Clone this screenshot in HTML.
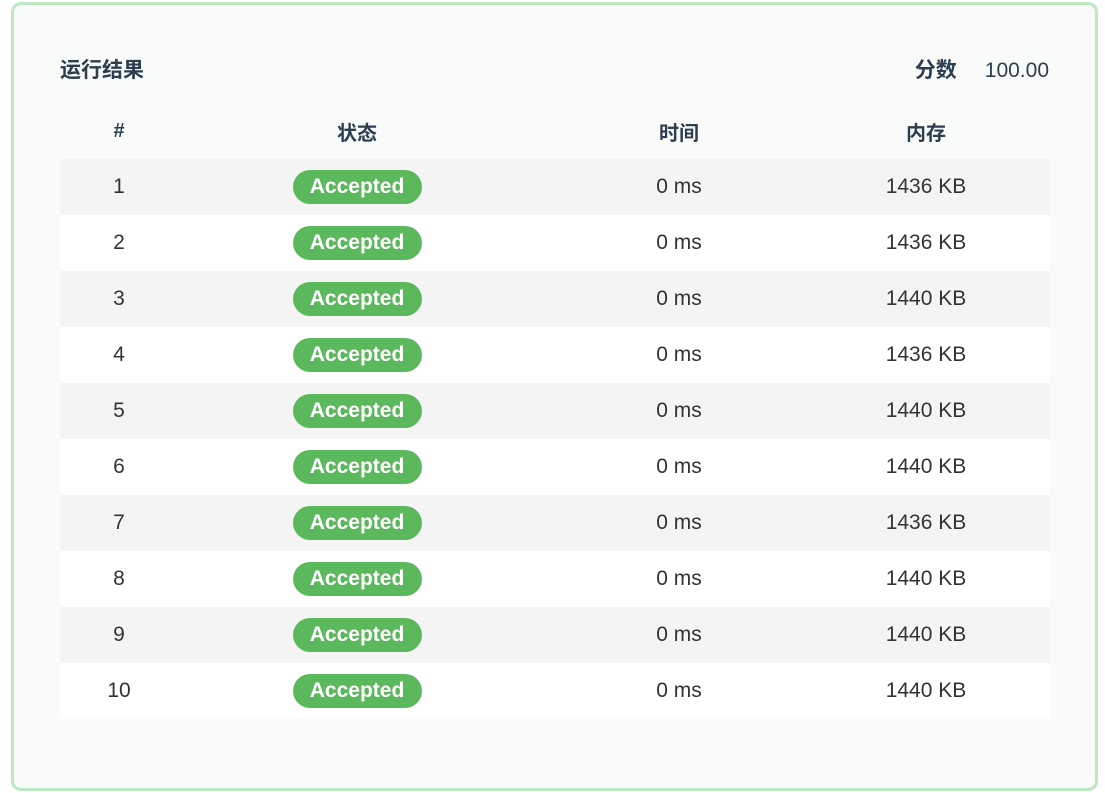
<!DOCTYPE html>
<html><head><meta charset="utf-8"><style>
body{margin:0;width:1105px;height:793px;background:#fff;font-family:"Liberation Sans","Noto Sans CJK SC",sans-serif;color:#333}
.card{position:absolute;left:11px;top:2px;width:1081px;height:783px;border:3px solid #bde8c1;border-radius:10px;background:#f8fbfa}
.title{position:absolute;left:60px;top:54px;font-size:21px;font-weight:bold;color:#2c3e50}
.score{position:absolute;right:56px;top:54px;font-size:21px;color:#2c3e50}
.score b{margin-right:28px}
.tbl{position:absolute;left:60px;top:103px;width:990px}
.row{display:flex;height:56px;align-items:center;font-size:21px;color:#333}
.row.h{font-weight:bold;color:#2c3e50;font-size:20px}
.row.g{background:#f4f4f4}.row.w{background:#fff}
.c{text-align:center}
.c1{width:118px}.c2{width:358px}.c3{width:286px}.c4{width:208px}
.b{display:inline-block;background:#5cb85c;color:#fff;font-weight:bold;font-size:21px;line-height:34px;height:34px;width:129px;border-radius:17px;text-align:center}
</style></head><body>
<div class="card"></div>
<div class="title">运行结果</div>
<div class="score"><b>分数</b>100.00</div>
<div class="tbl">
<div class="row h"><div class="c c1">#</div><div class="c c2">状态</div><div class="c c3">时间</div><div class="c c4">内存</div></div>
<div class="row g"><div class="c c1">1</div><div class="c c2"><span class="b">Accepted</span></div><div class="c c3">0 ms</div><div class="c c4">1436 KB</div></div>
<div class="row w"><div class="c c1">2</div><div class="c c2"><span class="b">Accepted</span></div><div class="c c3">0 ms</div><div class="c c4">1436 KB</div></div>
<div class="row g"><div class="c c1">3</div><div class="c c2"><span class="b">Accepted</span></div><div class="c c3">0 ms</div><div class="c c4">1440 KB</div></div>
<div class="row w"><div class="c c1">4</div><div class="c c2"><span class="b">Accepted</span></div><div class="c c3">0 ms</div><div class="c c4">1436 KB</div></div>
<div class="row g"><div class="c c1">5</div><div class="c c2"><span class="b">Accepted</span></div><div class="c c3">0 ms</div><div class="c c4">1440 KB</div></div>
<div class="row w"><div class="c c1">6</div><div class="c c2"><span class="b">Accepted</span></div><div class="c c3">0 ms</div><div class="c c4">1440 KB</div></div>
<div class="row g"><div class="c c1">7</div><div class="c c2"><span class="b">Accepted</span></div><div class="c c3">0 ms</div><div class="c c4">1436 KB</div></div>
<div class="row w"><div class="c c1">8</div><div class="c c2"><span class="b">Accepted</span></div><div class="c c3">0 ms</div><div class="c c4">1440 KB</div></div>
<div class="row g"><div class="c c1">9</div><div class="c c2"><span class="b">Accepted</span></div><div class="c c3">0 ms</div><div class="c c4">1440 KB</div></div>
<div class="row w"><div class="c c1">10</div><div class="c c2"><span class="b">Accepted</span></div><div class="c c3">0 ms</div><div class="c c4">1440 KB</div></div>
</div>
</body></html>
